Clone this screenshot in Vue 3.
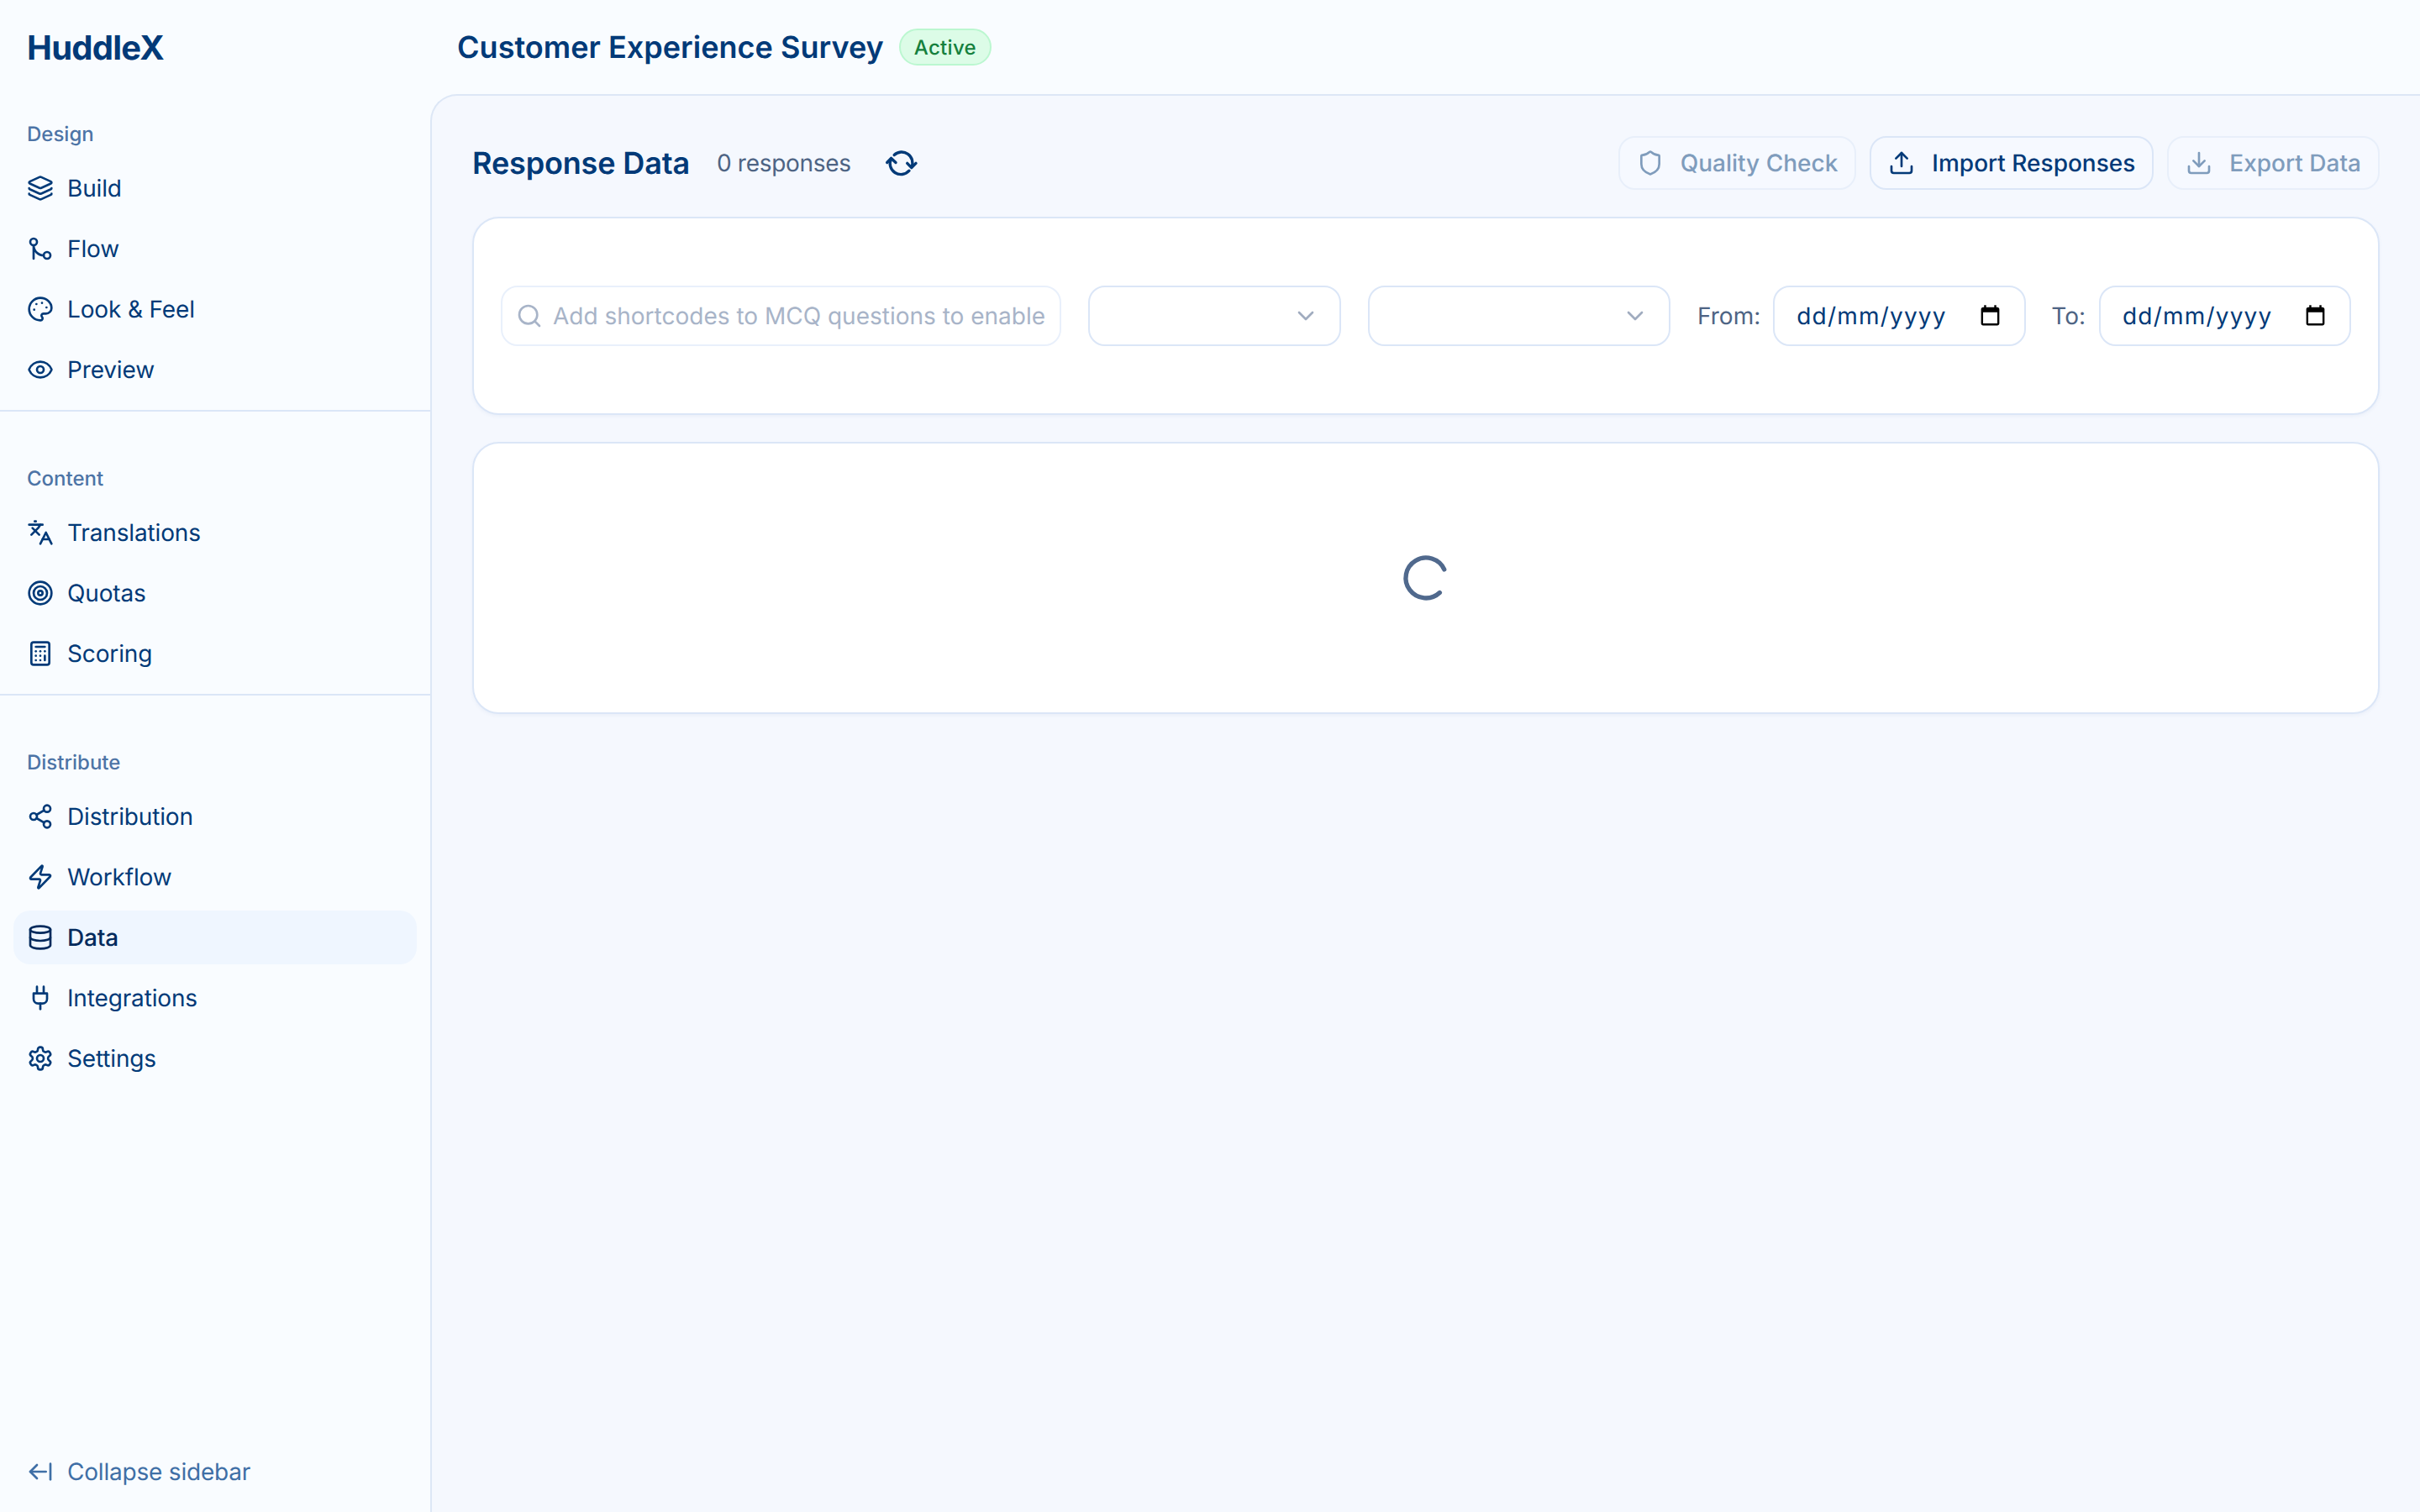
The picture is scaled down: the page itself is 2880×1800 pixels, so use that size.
<script setup>
const sections = [
  { label: 'Design', items: [
    { name: 'Build', icon: 'layers' }, { name: 'Flow', icon: 'route' },
    { name: 'Look & Feel', icon: 'palette' }, { name: 'Preview', icon: 'eye' } ] },
  { label: 'Content', items: [
    { name: 'Translations', icon: 'languages' }, { name: 'Quotas', icon: 'target' },
    { name: 'Scoring', icon: 'calc' } ] },
  { label: 'Distribute', items: [
    { name: 'Distribution', icon: 'share' }, { name: 'Workflow', icon: 'zap' },
    { name: 'Data', icon: 'db', active: true }, { name: 'Integrations', icon: 'plug' },
    { name: 'Settings', icon: 'gear' } ] },
]
const icons = {
  layers: ['M12.83 2.18a2 2 0 0 0-1.66 0L2.6 6.08a1 1 0 0 0 0 1.83l8.58 3.91a2 2 0 0 0 1.66 0l8.58-3.9a1 1 0 0 0 0-1.83z','M2 12a1 1 0 0 0 .58.91l8.6 3.91a2 2 0 0 0 1.65 0l8.58-3.9A1 1 0 0 0 22 12','M2 17a1 1 0 0 0 .58.91l8.6 3.91a2 2 0 0 0 1.65 0l8.58-3.9A1 1 0 0 0 22 17'],
  route: ['M21 18a3 3 0 1 1-6 0 3 3 0 0 1 6 0z','M9 6a3 3 0 1 1-6 0 3 3 0 0 1 6 0z','M6 21V9a9 9 0 0 0 9 9'],
  palette: ['M12 22a1 1 0 0 1 0-20 10 9 0 0 1 10 9 5 5 0 0 1-5 5h-2.25a1.75 1.75 0 0 0-1.4 2.8l.3.4a1.75 1.75 0 0 1-1.4 2.8z','M13.5 6.5h.01','M17.5 10.5h.01','M6.5 12.5h.01','M8.5 7.5h.01'],
  eye: ['M2.06 12.35a1 1 0 0 1 0-.7 10.75 10.75 0 0 1 19.88 0 1 1 0 0 1 0 .7 10.75 10.75 0 0 1-19.88 0','M15 12a3 3 0 1 1-6 0 3 3 0 0 1 6 0z'],
  languages: ['m5 8 6 6','m4 14 6-6 2-3','M2 5h12','M7 2h1','m22 22-5-10-5 10','M14 18h6'],
  target: ['M22 12a10 10 0 1 1-20 0 10 10 0 0 1 20 0z','M18 12a6 6 0 1 1-12 0 6 6 0 0 1 12 0z','M14 12a2 2 0 1 1-4 0 2 2 0 0 1 4 0z'],
  calc: ['M6 2h12a2 2 0 0 1 2 2v16a2 2 0 0 1-2 2H6a2 2 0 0 1-2-2V4a2 2 0 0 1 2-2z','M8 6h8','M16 14v4','M16 10h.01','M12 10h.01','M8 10h.01','M12 14h.01','M8 14h.01','M12 18h.01','M8 18h.01'],
  share: ['M21 5a3 3 0 1 1-6 0 3 3 0 0 1 6 0z','M9 12a3 3 0 1 1-6 0 3 3 0 0 1 6 0z','M21 19a3 3 0 1 1-6 0 3 3 0 0 1 6 0z','m8.59 13.51 6.83 3.98','m15.41 6.51-6.82 3.98'],
  zap: ['M4 14a1 1 0 0 1-.78-1.63l9.9-10.2a.5.5 0 0 1 .86.46l-1.92 6.02A1 1 0 0 0 13 10h7a1 1 0 0 1 .78 1.63l-9.9 10.2a.5.5 0 0 1-.86-.46l1.92-6.02A1 1 0 0 0 11 14z'],
  db: ['M21 5c0 1.66-4.03 3-9 3s-9-1.34-9-3 4.03-3 9-3 9 1.34 9 3z','M3 5v14a9 3 0 0 0 18 0V5','M3 12a9 3 0 0 0 18 0'],
  plug: ['M12 22v-5','M9 8V2','M15 8V2','M18 8v5a4 4 0 0 1-4 4h-4a4 4 0 0 1-4-4V8Z'],
  gear: ['M12.22 2h-.44a2 2 0 0 0-2 2v.18a2 2 0 0 1-1 1.73l-.43.25a2 2 0 0 1-2 0l-.15-.08a2 2 0 0 0-2.73.73l-.22.38a2 2 0 0 0 .73 2.73l.15.1a2 2 0 0 1 1 1.72v.51a2 2 0 0 1-1 1.74l-.15.09a2 2 0 0 0-.73 2.73l.22.38a2 2 0 0 0 2.73.73l.15-.08a2 2 0 0 1 2 0l.43.25a2 2 0 0 1 1 1.73V20a2 2 0 0 0 2 2h.44a2 2 0 0 0 2-2v-.18a2 2 0 0 1 1-1.73l.43-.25a2 2 0 0 1 2 0l.15.08a2 2 0 0 0 2.73-.73l.22-.39a2 2 0 0 0-.73-2.73l-.15-.08a2 2 0 0 1-1-1.74v-.5a2 2 0 0 1 1-1.74l.15-.09a2 2 0 0 0 .73-2.73l-.22-.38a2 2 0 0 0-2.73-.73l-.15.08a2 2 0 0 1-2 0l-.43-.25a2 2 0 0 1-1-1.73V4a2 2 0 0 0-2-2z','M15 12a3 3 0 1 1-6 0 3 3 0 0 1 6 0z'],
  collapse: ['m9 6-6 6 6 6','M3 12h14','M21 19V5'],
  shield: ['M20 13c0 5-3.5 7.5-7.66 8.95a1 1 0 0 1-.67-.01C7.5 20.5 4 18 4 13V6a1 1 0 0 1 1-1c2 0 4.5-1.2 6.24-2.72a1.17 1.17 0 0 1 1.52 0C14.51 3.81 17 5 19 5a1 1 0 0 1 1 1z'],
  upload: ['M21 15v4a2 2 0 0 1-2 2H5a2 2 0 0 1-2-2v-4','M17 8l-5-5-5 5','M12 3v12'],
  download: ['M21 15v4a2 2 0 0 1-2 2H5a2 2 0 0 1-2-2v-4','M7 10l5 5 5-5','M12 15V3'],
  search: ['M19 11a8 8 0 1 1-16 0 8 8 0 0 1 16 0z','m21 21-4.3-4.3'],
  chevron: ['m6 9 6 6 6-6'],
  loader: ['M21 12a9 9 0 1 1-6.219-8.56'],
}
const refresh = ['M23.2 14.5A12.9 12.9 0 0 1 43.9 29','M41 33.2A13 13 0 0 1 19.5 19','M14.7 23.5 19.6 18.4 25 23.5','M38.7 24.4 43.8 29.6 49 24.4']
</script>

<template>
  <div class="app">
    <aside class="sidebar">
      <div class="logo">HuddleX</div>
      <nav class="nav">
        <section v-for="s in sections" :key="s.label" class="group">
          <div class="group-label">{{ s.label }}</div>
          <ul class="items">
            <li v-for="it in s.items" :key="it.name" class="item" :class="{ active: it.active }">
              <svg class="ico" viewBox="0 0 24 24"><path v-for="d in icons[it.icon]" :key="d" :d="d" /></svg>
              <span>{{ it.name }}</span>
            </li>
          </ul>
        </section>
      </nav>
      <div class="collapse">
        <svg class="ico" viewBox="0 0 24 24"><path v-for="d in icons.collapse" :key="d" :d="d" /></svg>
        <span>Collapse sidebar</span>
      </div>
    </aside>
    <div class="right">
      <header class="topbar">
        <h1 class="title">Customer Experience Survey</h1>
        <span class="badge">Active</span>
      </header>
      <main class="panel">
        <div class="head">
          <div class="head-left">
            <h2 class="heading">Response Data</h2>
            <span class="count">0 responses</span>
            <svg class="refresh" viewBox="12 8 40 32"><path v-for="d in refresh" :key="d" :d="d" /></svg>
          </div>
          <div class="actions">
            <button class="btn off"><svg class="ico" viewBox="0 0 24 24"><path v-for="d in icons.shield" :key="d" :d="d" /></svg>Quality Check</button>
            <button class="btn"><svg class="ico" viewBox="0 0 24 24"><path v-for="d in icons.upload" :key="d" :d="d" /></svg>Import Responses</button>
            <button class="btn off"><svg class="ico" viewBox="0 0 24 24"><path v-for="d in icons.download" :key="d" :d="d" /></svg>Export Data</button>
          </div>
        </div>
        <div class="card filters">
          <div class="search">
            <svg class="ico" viewBox="0 0 24 24"><path v-for="d in icons.search" :key="d" :d="d" /></svg>
            <span>Add shortcodes to MCQ questions to enable</span>
          </div>
          <div class="select s1"><svg class="ico" viewBox="0 0 24 24"><path v-for="d in icons.chevron" :key="d" :d="d" /></svg></div>
          <div class="select s2"><svg class="ico" viewBox="0 0 24 24"><path v-for="d in icons.chevron" :key="d" :d="d" /></svg></div>
          <label class="dlabel">From:</label>
          <div class="date from">
            <span>dd/mm/yyyy</span>
            <svg class="cal" viewBox="0 0 24 24"><path d="M19 3h-1V1h-2v2H8V1H6v2H5c-1.11 0-2 .9-2 2v14c0 1.1.89 2 2 2h14c1.1 0 2-.9 2-2V5c0-1.1-.9-2-2-2zm0 16H5V8h14v11z" /></svg>
          </div>
          <label class="dlabel to">To:</label>
          <div class="date">
            <span>dd/mm/yyyy</span>
            <svg class="cal" viewBox="0 0 24 24"><path d="M19 3h-1V1h-2v2H8V1H6v2H5c-1.11 0-2 .9-2 2v14c0 1.1.89 2 2 2h14c1.1 0 2-.9 2-2V5c0-1.1-.9-2-2-2zm0 16H5V8h14v11z" /></svg>
          </div>
        </div>
        <div class="card loading">
          <svg class="ico spinner" viewBox="0 0 24 24"><path :d="icons.loader[0]" /></svg>
        </div>
      </main>
    </div>
  </div>
</template>

<style>
html, body { margin: 0; background: #f9fcff; }
</style>

<style scoped>
.app { display: flex; width: 2880px; height: 1800px; overflow: hidden; background: #f9fcff; font-family: Inter, "Liberation Sans", sans-serif; color: #023a78; text-rendering: geometricPrecision; }
.ico { width: 32px; height: 32px; flex: none; fill: none; stroke: currentColor; stroke-width: 2; stroke-linecap: round; stroke-linejoin: round; }

.sidebar { width: 512px; flex: none; display: flex; flex-direction: column; box-sizing: border-box; }
.logo { height: 112px; padding-left: 32px; display: flex; align-items: center; font-size: 40px; font-weight: 700; letter-spacing: -0.75px; }
.nav { flex: 1; }
.group { padding: 32px 0 16px 32px; border-bottom: 2px solid #dbe6f7; margin-bottom: 32px; }
.group:last-child { border-bottom: 0; }
.group-label { font-size: 24px; font-weight: 500; line-height: 32px; color: #4d74a6; }
.items { list-style: none; margin: 16px 0 0; padding: 0; display: flex; flex-direction: column; gap: 8px; }
.item { height: 64px; margin: 0 16px 0 -16px; padding-left: 16px; border-radius: 20px; display: flex; align-items: center; gap: 16px; font-size: 28px; letter-spacing: -0.15px; }
.item.active { background: #eff6ff; color: #032a5c; font-weight: 500; }
.collapse { height: 64px; margin-bottom: 16px; padding-left: 32px; display: flex; align-items: center; gap: 16px; font-size: 28px; letter-spacing: -0.2px; color: #3f6fa6; }

.right { flex: 1; min-width: 0; display: flex; flex-direction: column; }
.topbar { height: 112px; flex: none; padding-left: 32px; display: flex; align-items: center; gap: 18px; }
.title { margin: 0; font-size: 36px; font-weight: 600; letter-spacing: 0.03px; }
.badge { height: 44px; box-sizing: border-box; padding: 0 16px; display: flex; align-items: center; font-size: 24px; font-weight: 500; letter-spacing: 0.3px; color: #15803d; background: #dcfce7; border: 2px solid #bbf7d0; border-radius: 22px; }

.panel { flex: 1; border: 2px solid #dde7f6; border-width: 2px 0 0 2px; border-top-left-radius: 32px; background: #f5f8fe; padding: 48px; box-sizing: border-box; display: flex; flex-direction: column; }
.head { display: flex; align-items: center; justify-content: space-between; height: 64px; margin-bottom: 32px; }
.head-left { display: flex; align-items: center; }
.heading { margin: 0; font-size: 36px; font-weight: 600; letter-spacing: -0.15px; }
.count { margin-left: 32px; font-size: 28px; letter-spacing: -0.3px; color: #4e6484; }
.refresh { margin-left: 40px; width: 40px; height: 32px; flex: none; fill: none; stroke: currentColor; stroke-width: 3.4; stroke-linecap: round; stroke-linejoin: round; }
.actions { display: flex; gap: 16px; }
.btn { height: 64px; box-sizing: border-box; padding: 0 20px; display: flex; align-items: center; gap: 20px; font: 500 28px Inter, sans-serif; text-rendering: geometricPrecision; color: #023a78; background: #f6f9ff; border: 2px solid #dbe6f7; border-radius: 20px; }
.btn.off { color: #7f9cbc; border-color: #e8effa; }

.card { background: #fff; border: 2px solid #dbe6f7; border-radius: 32px; box-sizing: border-box; box-shadow: 0 2px 4px rgba(60,100,170,0.06); }
.filters { display: flex; align-items: center; height: 236px; padding: 0 32px; margin-bottom: 32px; }
.search { flex: 1; min-width: 0; overflow: hidden; height: 72px; box-sizing: border-box; display: flex; align-items: center; gap: 12px; padding-left: 16px; border: 2px solid #e9f0fb; border-radius: 20px; font-size: 28px; color: #a8b4c8; white-space: nowrap; }
.select { height: 72px; flex: none; box-sizing: border-box; border: 2px solid #dbe6f7; border-radius: 20px; display: flex; align-items: center; justify-content: flex-end; padding-right: 24px; color: #a0acbf; }
.s1 { width: 301px; margin-left: 32px; }
.s2 { width: 360px; margin-left: 32px; }
.dlabel { margin-left: 32px; flex: none; font-size: 28px; color: #4e6484; }
.dlabel.to { margin-left: 30px; }
.date { width: 300px; height: 72px; flex: none; box-sizing: border-box; margin-left: 16px; padding: 0 26px; border: 2px solid #dbe6f7; border-radius: 20px; display: flex; align-items: center; justify-content: space-between; font-size: 28px; letter-spacing: 1.2px; color: #023a78; }
.date.from { width: 301px; margin-left: 15px; }
.cal { width: 29px; height: 29px; flex: none; fill: #000; }
.loading { height: 324px; flex: none; display: flex; align-items: center; justify-content: center; }
.spinner { width: 64px; height: 64px; color: #50698d; transform: rotate(47deg); }
</style>
